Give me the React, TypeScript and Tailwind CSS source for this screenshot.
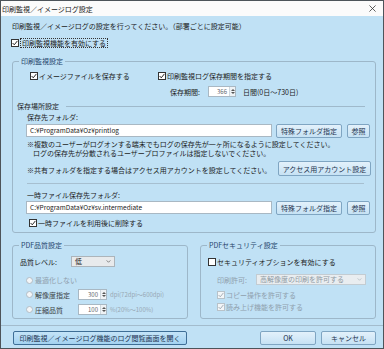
import type { ReactNode } from "react";

function CheckMark({ color }: { color: string }) {
  return (
    <svg viewBox="0 0 8 8" className="w-[6px] h-[6px]">
      <path d="M0.8 4 L3 6.4 L7.2 1.2" fill="none" stroke={color} strokeWidth="1.3" />
    </svg>
  );
}

function Check({
  label,
  checked,
  disabled,
  focus,
}: {
  label: string;
  checked?: boolean;
  disabled?: boolean;
  focus?: boolean;
}) {
  return (
    <div className="flex items-center h-[10px] gap-[1px]">
      <span
        className={`w-[8px] h-[8px] flex items-center justify-center border ${
          disabled ? "border-[#b8c2c9] bg-[#f3f6f8]" : "border-[#333] bg-white"
        }`}
      >
        {checked && <CheckMark color={disabled ? "#a3adb5" : "#222"} />}
      </span>
      <span
        className={`${disabled ? "text-[#8fa0ad]" : ""} ${
          focus ? "border border-dotted border-[#333] px-[1px] leading-[8px]" : ""
        }`}
      >
        {label}
      </span>
    </div>
  );
}

function Radio({ label, disabled }: { label: string; disabled?: boolean }) {
  return (
    <div className="flex items-center h-[10px] gap-[2px]">
      <span className="w-[7px] h-[7px] rounded-full border border-[#b3bdc5] bg-[#f4f6f8]" />
      <span className={disabled ? "text-[#8fa0ad]" : "text-[#3a3f44]"}>{label}</span>
    </div>
  );
}

function Btn({ children, className }: { children: ReactNode; className: string }) {
  return (
    <div
      className={`flex items-center justify-center border border-[#7fa5c2] rounded-[2px] bg-linear-to-b from-[#e3f1fb] to-[#c6e2f4] text-[#1d3450] ${className}`}
    >
      {children}
    </div>
  );
}

function Spin({ value, className }: { value: string; className: string }) {
  return (
    <div className={`flex h-[11px] border border-[#a9b8c3] bg-white ${className}`}>
      <span className="flex-1 text-right pr-[2px] text-[6px] leading-[9px] text-[#5f686f]">{value}</span>
      <span className="w-[6px] flex flex-col items-center justify-center gap-[1px] border-l border-[#cfd8de] bg-[#eef2f5]">
        <svg viewBox="0 0 4 2" className="w-[4px] h-[2px]">
          <path d="M0 2 L2 0 L4 2 Z" fill="#555" />
        </svg>
        <svg viewBox="0 0 4 2" className="w-[4px] h-[2px]">
          <path d="M0 0 L2 2 L4 0 Z" fill="#555" />
        </svg>
      </span>
    </div>
  );
}

function Chevron({ color }: { color: string }) {
  return (
    <svg viewBox="0 0 6 4" className="w-[5px] h-[3px]">
      <path d="M0.5 0.5 L3 3 L5.5 0.5" fill="none" stroke={color} strokeWidth="0.8" />
    </svg>
  );
}

function Group({
  title,
  className,
  children,
}: {
  title: string;
  className: string;
  children: ReactNode;
}) {
  return (
    <fieldset className={`border border-[#9db7c9] rounded-[3px] min-w-0 ${className}`}>
      <legend className="ml-[6px] px-[2px] leading-[10px] text-[#25456c]">{title}</legend>
      {children}
    </fieldset>
  );
}

function FolderRow({ path }: { path: string }) {
  return (
    <div className="flex items-start pl-[9px]">
      <div className="w-[246px] h-[13px] border border-[#a9b8c3] bg-white pl-[3px] text-[6.5px] leading-[11px] text-[#222]">
        {path}
      </div>
      <Btn className="ml-[4px] w-[66px] h-[14px]">特殊フォルダ指定</Btn>
      <Btn className="ml-[5px] w-[23px] h-[14px]">参照</Btn>
    </div>
  );
}

export default function App() {
  return (
    <div className="w-[384px] h-[349px] overflow-hidden flex flex-col bg-[#c0e1f5] border border-[#4d545a] text-[7px] leading-[10px] text-[#1b1b1b] font-['Noto_Sans_CJK_JP',sans-serif]">
      {/* Title bar */}
      <div className="h-[15px] shrink-0 bg-[#fbfbfb] flex items-center justify-between pl-[1px] pr-[7px]">
        <span className="text-[#222]">印刷監視／イメージログ設定</span>
        <svg viewBox="0 0 8 8" className="w-[7px] h-[7px]">
          <path d="M0.5 0.5 L7.5 7.5 M7.5 0.5 L0.5 7.5" stroke="#333" strokeWidth="0.9" />
        </svg>
      </div>

      <div className="flex-1 flex flex-col pl-[11px] pr-[7px]">
        <div className="mt-[5px]">印刷監視／イメージログの設定を行ってください。（部署ごとに設定可能）</div>
        <div className="mt-[7px] -ml-[1px]">
          <Check label="印刷監視機能を有効にする" checked focus />
        </div>

        {/* 印刷監視設定 */}
        <Group title="印刷監視設定" className="mt-[8px]">
          <div className="pl-[4px] pr-[4px] pt-[5px] pb-[4px]">
            <div className="flex pl-[13px]">
              <div className="w-[128px]">
                <Check label="イメージファイルを保存する" checked />
              </div>
              <Check label="印刷監視ログ保存期間を指定する" checked />
            </div>
            <div className="mt-[5px] h-[11px] flex items-center pl-[153px]">
              <span className="w-[38px]">保存期間:</span>
              <Spin value="366" className="w-[28px]" />
              <span className="ml-[7px]">日間(0日～730日)</span>
            </div>
            <div className="mt-[4px] flex items-center">
              <span>保存場所設定</span>
              <div className="flex-1 ml-[7px] mr-[6px] border-t border-[#9fb9cb]" />
            </div>
            <div className="mt-[1px] pl-[10px]">保存先フォルダ:</div>
            <div className="mt-[2px]">
              <FolderRow path="C:¥ProgramData¥Oz¥printlog" />
            </div>
            <div className="mt-[2px] pl-[10px] leading-[9px]">
              <div>※複数のユーザーがログオンする端末でもログの保存先が一ヶ所になるように設定してください。</div>
              <div className="pl-[6px]">ログの保存先が分散されるユーザープロファイルは指定しないでください。</div>
            </div>
            <div className="mt-[3px] pl-[10px] flex items-center justify-between">
              <span className="mt-[2px]">※共有フォルダを指定する場合はアクセス用アカウントを設定してください。</span>
              <Btn className="w-[93px] h-[15px]">アクセス用アカウント設定</Btn>
            </div>
            <div className="mt-[7px] ml-[10px] mr-[7px] border-t border-[#a6bfd0]" />
            <div className="mt-[6px] pl-[10px]">一時ファイル保存先フォルダ:</div>
            <div className="mt-[1px]">
              <FolderRow path="C:¥ProgramData¥Oz¥sv.intermediate" />
            </div>
            <div className="mt-[3px] pl-[12px]">
              <Check label="一時ファイルを利用後に削除する" checked />
            </div>
          </div>
        </Group>

        <div className="mt-[7px] flex gap-[12px]">
          {/* PDF品質設定 */}
          <Group title="PDF品質設定" className="w-[176px]">
            <div className="pl-[7px] pt-[6px] pb-[3px]">
              <div className="flex items-center h-[11px]">
                <span className="w-[51px]">品質レベル:</span>
                <div className="w-[44px] h-[11px] border border-[#acb4ba] bg-[#e8eaec] flex items-center justify-between pl-[3px] pr-[3px]">
                  <span className="leading-[9px]">低</span>
                  <Chevron color="#444" />
                </div>
              </div>
              <div className="mt-[8px] pl-[6px]">
                <Radio label="最適化しない" disabled />
              </div>
              <div className="mt-[4px] pl-[6px] h-[11px] flex items-center">
                <div className="w-[52px]">
                  <Radio label="解像度指定" />
                </div>
                <Spin value="300" className="w-[29px]" />
                <span className="ml-[3px] text-[6px] text-[#97a7b3]">dpi(72dpi～600dpi)</span>
              </div>
              <div className="mt-[4px] pl-[6px] h-[11px] flex items-center">
                <div className="w-[52px]">
                  <Radio label="圧縮品質" />
                </div>
                <Spin value="100" className="w-[29px]" />
                <span className="ml-[3px] text-[6px] text-[#97a7b3]">%(20%～100%)</span>
              </div>
            </div>
          </Group>

          {/* PDFセキュリティ設定 */}
          <Group title="PDFセキュリティ設定" className="flex-1">
            <div className="pl-[7px] pt-[7px] pb-[3px]">
              <Check label="セキュリティオプションを有効にする" />
              <div className="mt-[7px] pl-[9px] h-[11px] flex items-center">
                <span className="w-[39px] text-[#8fa0ad]">印刷許可:</span>
                <div className="w-[110px] h-[11px] border border-[#c3ccd2] bg-[#e9edf0] flex items-center justify-between pl-[3px] pr-[3px]">
                  <span className="leading-[9px] text-[#8f9aa3]">高解像度の印刷を許可する</span>
                  <Chevron color="#a5afb6" />
                </div>
              </div>
              <div className="mt-[5px] pl-[9px]">
                <Check label="コピー操作を許可する" checked disabled />
              </div>
              <div className="mt-[2px] pl-[9px]">
                <Check label="読み上げ機能を許可する" checked disabled />
              </div>
            </div>
          </Group>
        </div>

        <div className="mt-[6px] -ml-[11px] -mr-[7px] border-t border-[#a3bccd]" />

        <div className="mt-[5px] flex items-center">
          <div className="ml-[1px] w-[174px] h-[14px] flex items-center justify-center border border-[#3e6e96] rounded-[2px] bg-linear-to-b from-[#c4e4f8] to-[#a3d2f1] text-[#1d3450]">
            印刷監視／イメージログ機能のログ閲覧画面を開く
          </div>
          <Btn className="ml-auto w-[56px] h-[14px]">OK</Btn>
          <Btn className="ml-[5px] w-[55px] h-[14px]">キャンセル</Btn>
        </div>
      </div>
    </div>
  );
}
